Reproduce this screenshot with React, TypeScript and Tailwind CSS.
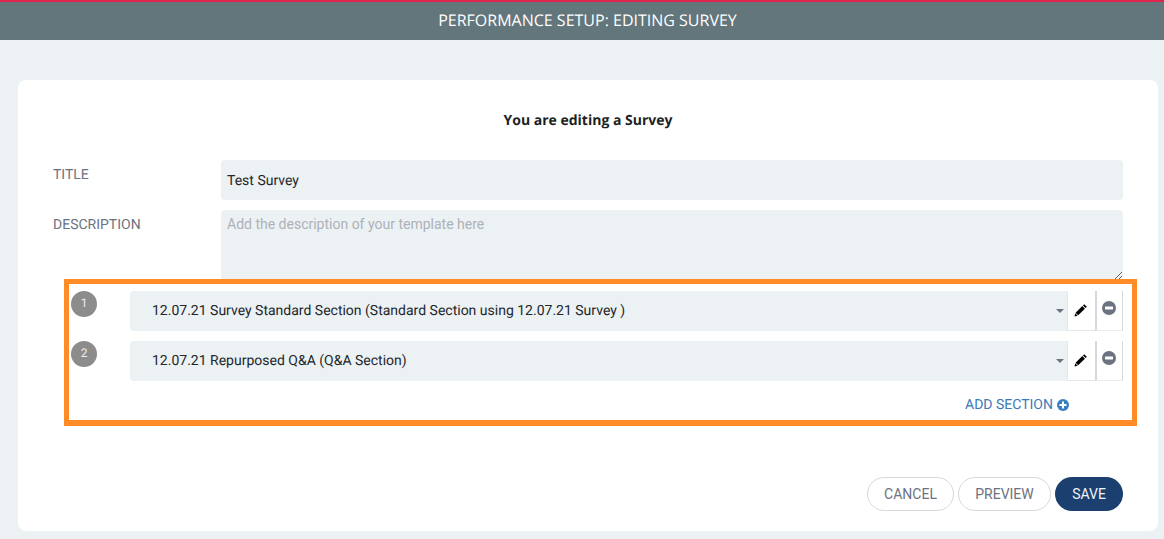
import React from "react";

const roboto = "font-['Roboto',sans-serif] [text-rendering:geometricPrecision]";

function Pencil() {
  return (
    <svg width="14" height="14" viewBox="0 0 14 14" className="block">
      <path d="M10.2 1.2 L12.8 3.8 L11.5 5.1 L8.9 2.5 Z" fill="#000" />
      <path d="M8.3 3.1 L10.9 5.7 L4.2 12.3 L1.6 9.7 Z" fill="#000" />
      <path d="M1.2 10.3 L3.7 12.8 L0.5 13.5 Z" fill="#000" />
    </svg>
  );
}

function Minus() {
  return (
    <svg width="14" height="14" viewBox="0 0 14 14" className="block">
      <circle cx="7" cy="7" r="7" fill="#6b7280" />
      <rect x="3" y="5.6" width="8" height="2.8" rx="0.4" fill="#fff" />
    </svg>
  );
}

function SectionRow({ n, text }: { n: number; text: string }) {
  return (
    <div className="flex h-10 items-start">
      <div className="flex h-[26px] w-[26px] shrink-0 items-center justify-center rounded-full bg-[#8c8c8c] pb-[3px] text-xs text-[#eeeeee]">
        {n}
      </div>
      <div className="ml-[33px] flex h-10 w-[937px] shrink-0 items-center justify-between rounded-l bg-[#ecf1f4] pl-[22px] pr-[3px] text-sm text-[#23262b]">
        <span>{text}</span>
        <span className="h-0 w-0 border-x-[4px] border-t-[4px] border-x-transparent border-t-[#6b7280]" />
      </div>
      <div className="flex h-10 w-7 shrink-0 justify-center border-b border-l border-[#e4e6e8] pr-[1px] pt-3">
        <Pencil />
      </div>
      <div className="flex h-10 w-7 shrink-0 justify-center border-x border-b border-l-2 border-[#d6d8da] border-b-[#e9ebed] pr-[2px] pt-[10px]">
        <Minus />
      </div>
    </div>
  );
}

export default function App() {
  return (
    <div className={`${roboto} h-[539px] w-[1164px] overflow-hidden bg-[#ecf1f4]`}>
      <header className="flex h-10 items-center justify-center border-t-2 border-[#e0264e] bg-[#62767c] pb-[2px] pl-[11px] font-['Open_Sans',sans-serif] text-base text-white">
        PERFORMANCE SETUP: EDITING SURVEY
      </header>
      <main className="ml-[18px] mt-10 h-[451px] w-[1140px] rounded-lg bg-white px-[35px]">
        <h1 className="pt-[32px] text-center font-['Open_Sans',sans-serif] text-sm leading-[18px] font-bold text-[#1c1f23]">
          You are editing a Survey
        </h1>
        <div className="mt-[30px] flex h-10">
          <label className="w-[168px] shrink-0 pt-[6px] text-sm leading-[18px] text-[#6b7280]">TITLE</label>
          <div className="flex h-10 flex-1 items-center rounded bg-[#ecf1f4] pl-[6px] pt-[2px] text-sm text-[#23262b]">Test Survey</div>
        </div>
        <div className="mt-[10px] flex h-[70px]">
          <label className="w-[168px] shrink-0 pt-[6px] text-sm leading-[18px] text-[#6b7280]">DESCRIPTION</label>
          <textarea
            readOnly
            placeholder="Add the description of your template here"
            className="h-[70px] flex-1 rounded bg-[#ecf1f4] px-[6px] py-[5px] text-sm leading-[18px] text-[#23262b] outline-none placeholder:text-[#adb2b8]"
          />
        </div>
        <div className="relative">
          <div className="absolute left-[11px] top-[-1px] h-[147px] w-[1073px] border-[5px] border-b-[6px] border-[#ff8c26]" />
          <div className="flex flex-col gap-[10px] pl-[18px] pt-[11px]">
            <SectionRow n={1} text="12.07.21 Survey Standard Section (Standard Section using 12.07.21 Survey )" />
            <SectionRow n={2} text="12.07.21 Repurposed Q&A (Q&A Section)" />
          </div>
          <div className="mt-[17px] flex h-[14px] items-center justify-end gap-[4px] pr-[54px] text-sm leading-none text-[#3a7ab8]">
            <span>ADD SECTION</span>
            <svg width="12" height="12" viewBox="0 0 12 12">
              <circle cx="6" cy="6" r="6" fill="#3a7fc0" />
              <rect x="2.5" y="5" width="7" height="2" fill="#fff" />
              <rect x="5" y="2.5" width="2" height="7" fill="#fff" />
            </svg>
          </div>
        </div>
        <div className="mt-[65px] flex justify-end gap-1 text-sm">
          <button className="h-[34px] w-[87px] rounded-full border border-[#d6d8da] text-[#6b7280]">CANCEL</button>
          <button className="h-[34px] w-[93px] rounded-full border border-[#d6d8da] text-[#6b7280]">PREVIEW</button>
          <button className="h-[34px] w-[68px] rounded-full bg-[#1b3f6e] text-[#f0f3f7]">SAVE</button>
        </div>
      </main>
    </div>
  );
}
